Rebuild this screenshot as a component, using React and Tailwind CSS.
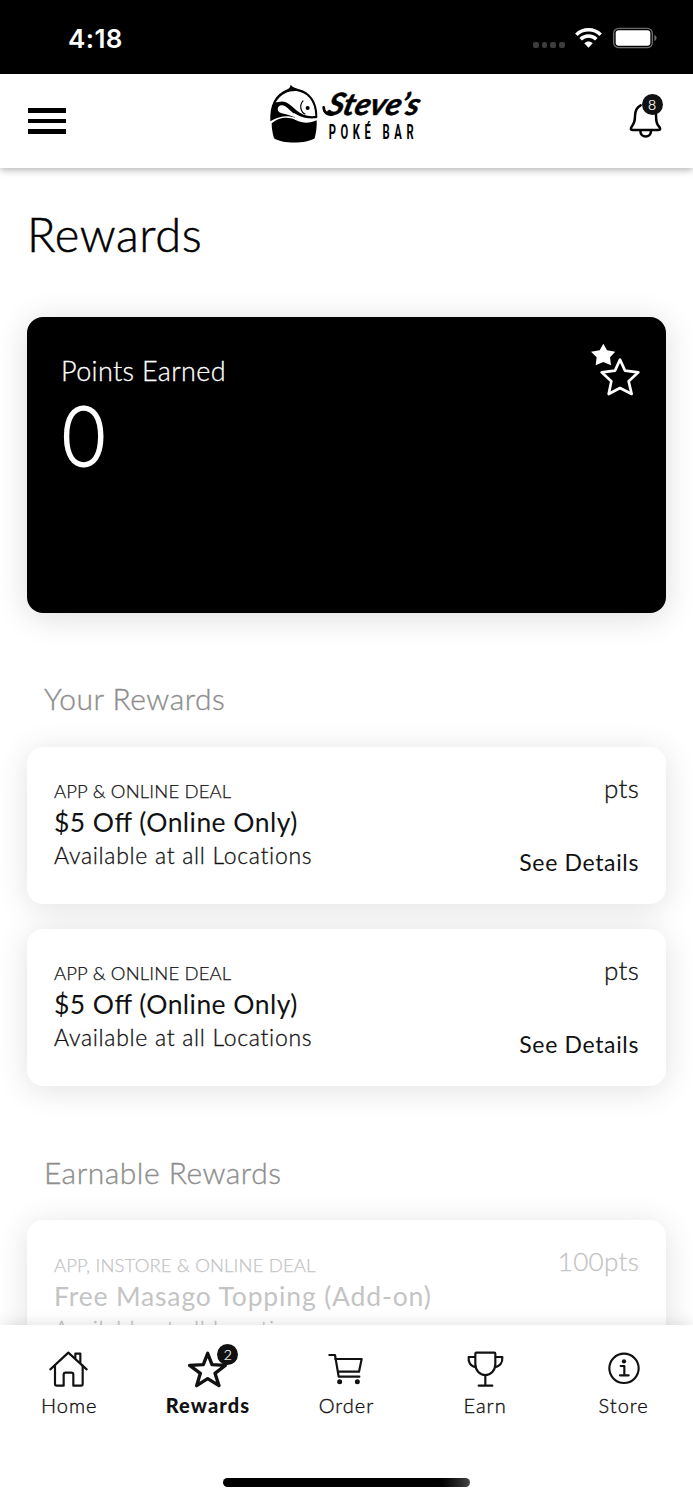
import clsx from 'clsx';

const rewards = [
  { id: 1, channel: 'APP & ONLINE DEAL', title: '$5 Off (Online Only)', points: 'pts' },
  { id: 2, channel: 'APP & ONLINE DEAL', title: '$5 Off (Online Only)', points: 'pts' },
];

const earnable = [
  { id: 3, channel: 'APP, INSTORE & ONLINE DEAL', title: 'Free Masago Topping (Add-on)', points: '100pts' },
];

function StatusBar() {
  return (
    <div className="h-[73.5px] shrink-0 bg-black flex items-start justify-between pl-[68px] pr-[36px] pt-[22px]">
      <span className="font-['Inter'] font-semibold text-[26px] leading-[33px] tracking-[0.4px] text-white">4:18</span>
      <div className="flex items-start">
        <div className="flex gap-[3px] mt-[20px] mr-[10.5px]">
          {[0, 1, 2, 3].map((i) => (
            <span key={i} className="w-[5.6px] h-[5.6px] rounded-[2px] bg-[#3d3d3d]" />
          ))}
        </div>
        <svg width="27" height="21" viewBox="0 0 81 63" className="mt-[5px] mr-[11px]" fill="none" stroke="#fff" strokeWidth="10.500">
          <path d="M4 23 C24 3 57 3 77 23" />
          <path d="M17 37 C30 24 51 24 64 37" />
          <path d="M28 49 C35 42 46 42 53 49 L40.500 62 Z" fill="#fff" stroke="none" />
        </svg>
        <svg width="44" height="22" viewBox="0 0 132 66" className="mt-[5px]">
          <rect x="2" y="4" width="116" height="58" rx="15" fill="none" stroke="#6b6b6b" strokeWidth="4" />
          <rect x="8" y="10" width="104" height="46" rx="9" fill="#fff" />
          <path d="M124 23 Q131 27 131 33 Q131 39 124 43 Z" fill="#6b6b6b" />
        </svg>
      </div>
    </div>
  );
}

function Logo() {
  return (
    <svg width="180" height="80" viewBox="0 0 540 240" className="absolute left-[255px] top-[1.5px]">
      {/* fish over the bowl */}
      <path d="M107 29 C113 37 121 39 130 42 C165 50 188 80 187 125 C187 128 184 130 180 130 C150 132 132 124 117 114 L120 128 C100 121 74 121 46 139 C44 92 58 57 99 42 C104 39 106 34 107 29 Z" />
      <path d="M62 82 C78 55 103 47 124 48 C157 53 180 77 181 123 C158 125 140 120 124 106 C104 88 92 78 78 80 C72 80 66 82 62 82 Z" fill="#fff" />
      <path d="M70 96 C78 86 92 92 104 105 C116 117 130 124 143 129 C120 131 98 117 80 115 C69 112 66 103 70 96 Z" fill="#fff" />
      <path d="M145 77 C132 90 136 110 151 118" fill="none" stroke="#000" strokeWidth="3.500" />
      <circle cx="158" cy="99" r="6" />
      <path d="M50 145 C74 124 102 125 122 135 C144 146 164 146 185 136 C186 156 183 175 179 190 C156 207 79 207 57 190 C53 176 50 161 50 145 Z" />
      <path d="M206 97 C206 112 218 121 232 118" fill="none" stroke="#000" strokeWidth="8" strokeLinecap="round" />
      <text transform="translate(212 121) skewX(-14)" className="font-['Lato'] font-bold italic" fontSize="92" stroke="#000" strokeWidth="1.500" textLength="276" lengthAdjust="spacingAndGlyphs">Steve’s</text>
      <text transform="translate(221 191) scale(.56 1)" className="font-['Roboto'] font-bold" fontSize="60" textLength="455">POKÉ BAR</text>
    </svg>
  );
}

function Badge({ children, className }) {
  return (
    <span className={clsx("absolute w-[21px] h-[21px] rounded-full bg-[#111] text-white text-[14px] leading-[21px] font-light [-webkit-text-stroke:0.2px] text-center", className)}>
      {children}
    </span>
  );
}

function Header() {
  return (
    <header className="relative z-10 h-[94.500px] shrink-0 bg-white flex items-center justify-between px-7 shadow-[0_2px_7px_rgba(0,0,0,0.3)]">
      <Logo />
      <div className="w-[38px] flex flex-col gap-[6px]">
        <span className="h-[4.500px] bg-black" />
        <span className="h-[4.500px] bg-black" />
        <span className="h-[4.500px] bg-black" />
      </div>
      <div className="relative w-9 h-[42px] mt-[-9px] mr-[1px]">
        <svg width="36" height="42" viewBox="0 0 108 126" fill="none" stroke="#000" strokeWidth="7.500" strokeLinecap="round" strokeLinejoin="round" className="overflow-visible">
          <path d="M38 31 C24 38 21 50 21 64 C21 82 17 88 10 97 Q6 105 13 105 H92 Q99 105 95 97 C87 88 84 82 84 60 C84 45 77 31 62 31" />
          <path d="M37 107 C37 130 69 130 69 107" />
        </svg>
        <Badge className="left-[13.5px] top-[-1px]">8</Badge>
      </div>
    </header>
  );
}

function PointsCard() {
  return (
    <div className="h-[295.5px] shrink-0 rounded-2xl bg-black text-white flex justify-between pl-[34px] pr-6 shadow-[0_4px_32px_rgba(0,0,0,0.14)]">
      <div>
        <p className="mt-[38px] text-[27px] leading-8 font-light tracking-[0.35px] [-webkit-text-stroke:0.3px]">Points Earned</p>
        <p className="mt-[-5px] ml-[1px] text-[83px] leading-[104px] font-light [-webkit-text-stroke:1.8px] origin-left scale-x-[0.9]">0</p>
      </div>
      <svg width="54" height="60" viewBox="0 0 162 180" className="mt-[23px]">
        <path d="M46 11 L57 31 L82 35 L66 52 L69 76 L46 66 L23 76 L26 52 L9 35 L35 31 Z" fill="#fff" />
        <path d="M96 59 L111 92 L151 97 L122 124 L131 162 L96 144 L62 162 L70 124 L41 97 L81 92 Z" fill="#000" stroke="#fff" strokeWidth="8" strokeLinejoin="round" />
      </svg>
    </div>
  );
}

function RewardCard({ reward, locked }) {
  return (
    <div className={clsx("h-[157.25px] shrink-0 rounded-2xl bg-white px-[27px] pt-[25px] pb-[26px] flex justify-between shadow-[0_4px_32px_rgba(0,0,0,0.12)]", locked ? "text-[#c4c4c4]" : "text-[#111]")}>
      <div className="pt-[5.5px]">
        <p className="text-[18.5px] leading-7 font-light tracking-[0.15px] [-webkit-text-stroke:0.25px]">{reward.channel}</p>
        <p className={clsx("text-[26.5px] leading-[34px] font-normal [font-feature-settings:'liga']", locked ? "tracking-[0.85px]" : "tracking-[0.45px]")}>{reward.title}</p>
        <p className="text-[23px] leading-[32px] font-light tracking-[0.7px] [-webkit-text-stroke:0.3px]">Available at all Locations</p>
      </div>
      <div className="flex flex-col justify-between text-right">
        <p className="text-[26px] leading-8 font-light tracking-[0.3px] [-webkit-text-stroke:0.3px]">{reward.points}</p>
        {!locked && <p className="text-[23px] leading-8 font-normal tracking-[0.65px]">See Details</p>}
      </div>
    </div>
  );
}

function SectionTitle({ children }) {
  return (
    <h2 className="mt-[65.5px] mb-[28.5px] pl-[17px] text-[30px] leading-10 font-light tracking-[0.5px] text-[#8e8e8e] [-webkit-text-stroke:0.35px]">{children}</h2>
  );
}

function HomeIcon() {
  return (
    <g strokeWidth="6.500">
      <path d="M4 61 L58 11 L113 61" />
      <path d="M18 50 V105 Q18 110 23 110 H44 V77 Q44 71 50 71 H67 Q73 71 73 77 V110 H96 Q101 110 101 105 V50" />
      <path d="M79 27 V14 H94 V42" />
    </g>
  );
}

function StarIcon() {
  return <path strokeWidth="10" d="M59 13 L72 47 L112 49 L81 73 L93 110 L59 89 L26 110 L37 73 L5 49 L46 47 Z" />;
}

function CartIcon() {
  return (
    <g strokeWidth="6.500">
      <path d="M10 18 H27 L38 83 H100" />
      <path d="M28 30 H107 L99 68 H36" />
      <circle cx="41" cy="98" r="7.500" fill="#111" stroke="none" />
      <circle cx="94" cy="98" r="7.500" fill="#111" stroke="none" />
    </g>
  );
}

function TrophyIcon() {
  return (
    <g strokeWidth="6.500">
      <path d="M31 14 Q31 11 34 11 H88 Q91 11 91 14 V45 C91 65 77 78 61 78 C45 78 31 65 31 45 Z" />
      <path d="M29 24 H11 C9 39 16 52 32 54" />
      <path d="M93 24 H112 C113 39 106 52 90 54" />
      <path d="M61 78 V110 M41 110 H82" />
    </g>
  );
}

function InfoIcon() {
  return (
    <g strokeWidth="6.500">
      <circle cx="60" cy="58" r="44" />
      <circle cx="60" cy="37" r="6.500" fill="#111" stroke="none" />
      <path d="M50 51 H61 V79 M48 79 H74" />
    </g>
  );
}

const tabs = [
  { label: 'Home', Icon: HomeIcon },
  { label: 'Rewards', Icon: StarIcon, active: true, badge: 2 },
  { label: 'Order', Icon: CartIcon },
  { label: 'Earn', Icon: TrophyIcon },
  { label: 'Store', Icon: InfoIcon },
];

function TabBar() {
  return (
    <nav className="relative z-10 h-[175px] shrink-0 bg-white shadow-[0_-1px_16px_rgba(0,0,0,0.12)] flex flex-col items-center justify-between pb-[13.5px]">
      <div className="w-full grid grid-cols-5 pt-6">
        {tabs.map(({ label, Icon, active, badge }) => (
          <div key={label} className="flex flex-col items-center text-[#111]">
            <div className="relative w-10 h-10">
              <svg width="40" height="40" viewBox="0 0 120 120" fill="none" stroke="#111" strokeLinecap="round" strokeLinejoin="round">
                <Icon />
              </svg>
              {badge && <Badge className="left-[29.5px] top-[-5px]">{badge}</Badge>}
            </div>
            <span className={clsx("mt-[2px] text-[20px] leading-7", active ? "font-black tracking-[1.1px]" : "font-light tracking-[1px] [-webkit-text-stroke:0.35px]")}>{label}</span>
          </div>
        ))}
      </div>
      <div className="w-[247px] h-[8.5px] rounded-full bg-linear-to-r from-black from-85% to-[#444]" />
    </nav>
  );
}

export default function App() {
  return (
    <div className="w-[693px] h-[1500px] flex flex-col overflow-hidden bg-white font-['Lato',sans-serif]">
      <StatusBar />
      <Header />
      <main className="flex-1 min-h-0 overflow-hidden px-[27px] flex flex-col">
        <h1 className="mt-[34px] mb-[50px] text-[47px] leading-[65px] font-light tracking-[0.6px] text-black [-webkit-text-stroke:0.5px]">Rewards</h1>
        <PointsCard />
        <SectionTitle>Your Rewards</SectionTitle>
        <div className="flex flex-col gap-[25px]">
          {rewards.map((reward) => <RewardCard key={reward.id} reward={reward} />)}
        </div>
        <SectionTitle>Earnable Rewards</SectionTitle>
        {earnable.map((reward) => <RewardCard key={reward.id} reward={reward} locked />)}
      </main>
      <TabBar />
    </div>
  );
}
